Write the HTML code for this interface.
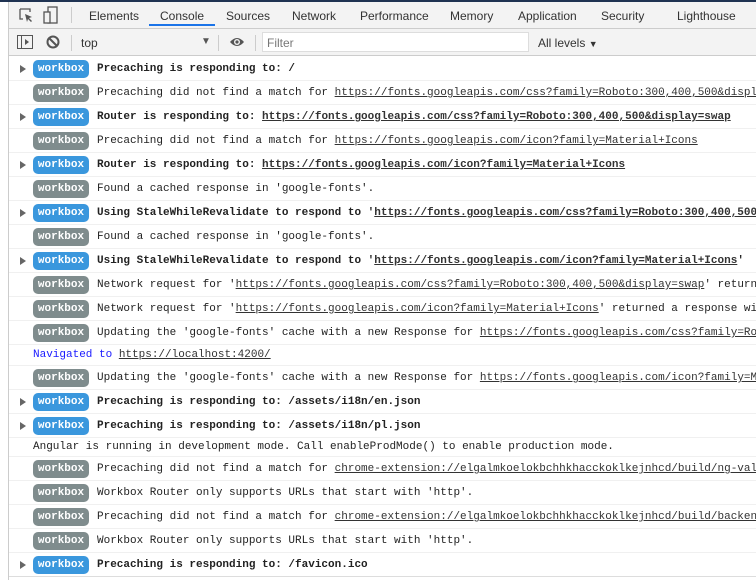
<!DOCTYPE html><html><head><style>
*{margin:0;padding:0;box-sizing:border-box}
body{width:756px;height:580px;overflow:hidden;background:#fff;font-family:"Liberation Sans",sans-serif;position:relative}
#top{position:absolute;left:0;top:0;width:756px;height:2px;background:#1f3352}
#lb{position:absolute;left:8px;top:2px;width:1px;height:578px;background:#ccc}
#tabs{position:absolute;left:9px;top:2px;right:0;height:27px;background:#f3f3f3;border-bottom:1px solid #ccc;font-size:12px;color:#333}
#tabs span{position:absolute;top:7px}
#ul{position:absolute;left:149px;top:24px;width:66px;height:2px;background:#1a73e8}
#tb{position:absolute;left:9px;top:29px;right:0;height:27px;background:#f3f3f3;border-bottom:1px solid #ccc;font-size:12px;color:#333}
.row{position:absolute;left:9px;right:0;height:24px;border-bottom:1px solid #f0f0f0;font-family:"Liberation Mono",monospace;font-size:11px;white-space:nowrap;overflow:hidden;color:#222}
.row .t{position:absolute;left:88px;top:0;line-height:24px}
.row.s .t{line-height:21px}
.b{position:absolute;left:24px;top:3px;width:56px;height:18px;border-radius:5px;color:#fff;font-weight:bold;text-align:center;line-height:18px;font-size:11px}
.bl{background:#3a97dd}.gr{background:#7f8c8d}
.ar{position:absolute;left:11px;top:8px;width:0;height:0;border-left:6px solid #666;border-top:4px solid transparent;border-bottom:4px solid transparent}
b{font-weight:bold}
u{text-decoration:underline;color:#333}
</style></head><body>
<div id="top"></div><div id="lb"></div>
<div id="tabs">
<svg style="position:absolute;left:9px;top:5px" width="16" height="16"><path d="M2 2h10v3M2 2v10h3" fill="none" stroke="#555" stroke-width="1.3"/><path d="M7 7l7 3-3 1 3 3-1 1-3-3-1 3z" fill="#555"/></svg>
<svg style="position:absolute;left:34px;top:4px" width="16" height="18"><rect x="5" y="1" width="9" height="16" fill="none" stroke="#555" stroke-width="1.3"/><rect x="1" y="6" width="6" height="11" fill="#f3f3f3" stroke="#555" stroke-width="1.3"/></svg>
<div style="position:absolute;left:62px;top:5px;width:1px;height:16px;background:#ccc"></div>
<span style="left:80px">Elements</span><span style="left:151px">Console</span><span style="left:217px">Sources</span><span style="left:283px">Network</span><span style="left:351px">Performance</span><span style="left:441px">Memory</span><span style="left:509px">Application</span><span style="left:592px">Security</span><span style="left:668px">Lighthouse</span>
</div>
<div id="ul"></div>
<div id="tb">
<svg style="position:absolute;left:8px;top:6px" width="16" height="14"><rect x="0.5" y="0.5" width="15" height="13" fill="none" stroke="#555"/><line x1="4.5" y1="1" x2="4.5" y2="13" stroke="#555"/><path d="M8 4l4 3-4 3z" fill="#555"/></svg>
<svg style="position:absolute;left:37px;top:6px" width="14" height="14"><circle cx="7" cy="7" r="5.5" fill="none" stroke="#555" stroke-width="2"/><line x1="3" y1="3" x2="11" y2="11" stroke="#555" stroke-width="2"/></svg>
<div style="position:absolute;left:62px;top:6px;width:1px;height:16px;background:#ccc"></div>
<span style="position:absolute;left:72px;top:7px">top</span>
<span style="position:absolute;left:192px;top:7px;font-size:10px;color:#555">▼</span>
<div style="position:absolute;left:209px;top:6px;width:1px;height:16px;background:#ccc"></div>
<svg style="position:absolute;left:220px;top:7px" width="16" height="12"><path d="M1 6Q8-2 15 6Q8 14 1 6z" fill="#555"/><circle cx="8" cy="6" r="3" fill="#f3f3f3"/><circle cx="8" cy="6" r="1.6" fill="#555"/></svg>
<div style="position:absolute;left:246px;top:6px;width:1px;height:16px;background:#ccc"></div>
<div style="position:absolute;left:253px;top:3px;width:267px;height:20px;background:#fff;border:1px solid #ddd;padding:3px 4px;color:#777">Filter</div>
<span style="position:absolute;left:529px;top:7px;color:#333">All levels <span style="font-size:9px">▼</span></span>
</div>
<div class="row" style="top:57px"><div class="ar"></div><div class="b bl">workbox</div><span class="t"><b>Precaching is responding to: /</b></span></div>
<div class="row" style="top:81px"><div class="b gr">workbox</div><span class="t">Precaching did not find a match for <u>https://fonts.googleapis.com/css?family=Roboto:300,400,500&amp;display=swap</u></span></div>
<div class="row" style="top:105px"><div class="ar"></div><div class="b bl">workbox</div><span class="t"><b>Router is responding to: <u>https://fonts.googleapis.com/css?family=Roboto:300,400,500&amp;display=swap</u></b></span></div>
<div class="row" style="top:129px"><div class="b gr">workbox</div><span class="t">Precaching did not find a match for <u>https://fonts.googleapis.com/icon?family=Material+Icons</u></span></div>
<div class="row" style="top:153px"><div class="ar"></div><div class="b bl">workbox</div><span class="t"><b>Router is responding to: <u>https://fonts.googleapis.com/icon?family=Material+Icons</u></b></span></div>
<div class="row" style="top:177px"><div class="b gr">workbox</div><span class="t">Found a cached response in 'google-fonts'.</span></div>
<div class="row" style="top:201px"><div class="ar"></div><div class="b bl">workbox</div><span class="t"><b>Using StaleWhileRevalidate to respond to '<u>https://fonts.googleapis.com/css?family=Roboto:300,400,500&amp;display=swap</u>'</b></span></div>
<div class="row" style="top:225px"><div class="b gr">workbox</div><span class="t">Found a cached response in 'google-fonts'.</span></div>
<div class="row" style="top:249px"><div class="ar"></div><div class="b bl">workbox</div><span class="t"><b>Using StaleWhileRevalidate to respond to '<u>https://fonts.googleapis.com/icon?family=Material+Icons</u>'</b></span></div>
<div class="row" style="top:273px"><div class="b gr">workbox</div><span class="t">Network request for '<u>https://fonts.googleapis.com/css?family=Roboto:300,400,500&amp;display=swap</u>' returned a response</span></div>
<div class="row" style="top:297px"><div class="b gr">workbox</div><span class="t">Network request for '<u>https://fonts.googleapis.com/icon?family=Material+Icons</u>' returned a response with</span></div>
<div class="row" style="top:321px"><div class="b gr">workbox</div><span class="t">Updating the 'google-fonts' cache with a new Response for <u>https://fonts.googleapis.com/css?family=Roboto</u></span></div>
<div class="row s" style="top:345px;height:21px"><span class="t" style="left:24px;color:#1a1aff">Navigated to <u>https://localhost:4200/</u></span></div>
<div class="row" style="top:366px"><div class="b gr">workbox</div><span class="t">Updating the 'google-fonts' cache with a new Response for <u>https://fonts.googleapis.com/icon?family=Material</u></span></div>
<div class="row" style="top:390px"><div class="ar"></div><div class="b bl">workbox</div><span class="t"><b>Precaching is responding to: /assets/i18n/en.json</b></span></div>
<div class="row" style="top:414px"><div class="ar"></div><div class="b bl">workbox</div><span class="t"><b>Precaching is responding to: /assets/i18n/pl.json</b></span></div>
<div class="row s" style="top:438px;height:19px"><span class="t" style="left:24px;line-height:19px">Angular is running in development mode. Call enableProdMode() to enable production mode.</span></div>
<div class="row" style="top:457px"><div class="b gr">workbox</div><span class="t">Precaching did not find a match for <u>chrome-extension://elgalmkoelokbchhkhacckoklkejnhcd/build/ng-validate</u></span></div>
<div class="row" style="top:481px"><div class="b gr">workbox</div><span class="t">Workbox Router only supports URLs that start with 'http'.</span></div>
<div class="row" style="top:505px"><div class="b gr">workbox</div><span class="t">Precaching did not find a match for <u>chrome-extension://elgalmkoelokbchhkhacckoklkejnhcd/build/backend</u></span></div>
<div class="row" style="top:529px"><div class="b gr">workbox</div><span class="t">Workbox Router only supports URLs that start with 'http'.</span></div>
<div class="row" style="top:553px;border-bottom:1px solid #ddd"><div class="ar"></div><div class="b bl">workbox</div><span class="t"><b>Precaching is responding to: /favicon.ico</b></span></div>
</body></html>
